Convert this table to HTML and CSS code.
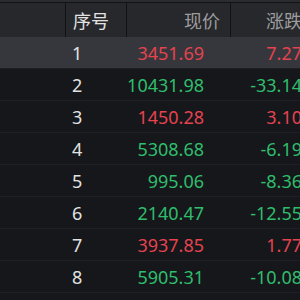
FILE: index.html
```html
<!DOCTYPE html>
<html lang="zh">
<head>
<meta charset="utf-8">
<link rel="stylesheet" href="styles.css">
</head>
<body>
<div class="board">
  <div class="row head">
    <div class="cell c0"></div>
    <div class="cell c1">序号</div>
    <div class="cell c2">现价</div>
    <div class="cell c3">涨跌幅</div>
  </div>
  <div class="row sel">
    <div class="cell c0"></div><div class="cell c1">1</div><div class="cell c2 up">3451.69</div><div class="cell c3 up">7.27</div>
  </div>
  <div class="row">
    <div class="cell c0"></div><div class="cell c1">2</div><div class="cell c2 down">10431.98</div><div class="cell c3 down">-33.14</div>
  </div>
  <div class="row">
    <div class="cell c0"></div><div class="cell c1">3</div><div class="cell c2 up">1450.28</div><div class="cell c3 up">3.10</div>
  </div>
  <div class="row">
    <div class="cell c0"></div><div class="cell c1">4</div><div class="cell c2 down">5308.68</div><div class="cell c3 down">-6.19</div>
  </div>
  <div class="row">
    <div class="cell c0"></div><div class="cell c1">5</div><div class="cell c2 down">995.06</div><div class="cell c3 down">-8.36</div>
  </div>
  <div class="row">
    <div class="cell c0"></div><div class="cell c1">6</div><div class="cell c2 down">2140.47</div><div class="cell c3 down">-12.55</div>
  </div>
  <div class="row">
    <div class="cell c0"></div><div class="cell c1">7</div><div class="cell c2 up">3937.85</div><div class="cell c3 up">1.77</div>
  </div>
  <div class="row">
    <div class="cell c0"></div><div class="cell c1">8</div><div class="cell c2 down">5905.31</div><div class="cell c3 down">-10.08</div>
  </div>
</div>
</body>
</html>
```
FILE: styles.css
```css
html, body {
  margin: 0;
  padding: 0;
  background: #15171b;
  overflow: hidden;
}
body {
  width: 300px;
  height: 300px;
  font-family: "Noto Sans", "Noto Sans CJK SC", sans-serif;
  font-size: 18px;
}
.board {
  width: 340px;
  display: flex;
  flex-direction: column;
}
.row {
  display: grid;
  grid-template-columns: 65px 61px 104px 110px;
  height: 31px;
  border-bottom: 1px solid #1d1f24;
  align-items: center;
}
.head {
  height: 34px;
  background: #27282c;
  border-top: 1px solid #121316;
  border-bottom: none;
  margin-top: 2px;
  color: #9c9c9c;
  align-items: stretch;
  box-shadow: 0 -2px 0 #2b2c30;
}
.head .cell {
  display: flex;
  align-items: center;
  padding-top: 2px;
}
.head .c1, .head .c2, .head .c3 {
  border-left: 1px solid #111215;
}
.head .c2 {
  justify-content: flex-end;
  padding-right: 10px;
}
.head .c3 {
  justify-content: flex-end;
  padding-right: 20px;
}
.sel {
  background: #36373c;
}
.cell {
  white-space: nowrap;
  line-height: 1;
}
.c1 {
  padding-left: 7px;
  color: #e2e2e2;
}
.c2, .c3 {
  text-align: right;
}
.c2 {
  padding-right: 26px;
}
.c3 {
  padding-right: 38px;
}
.up {
  color: #e4434f;
}
.down {
  color: #30bd6c;
}
```
